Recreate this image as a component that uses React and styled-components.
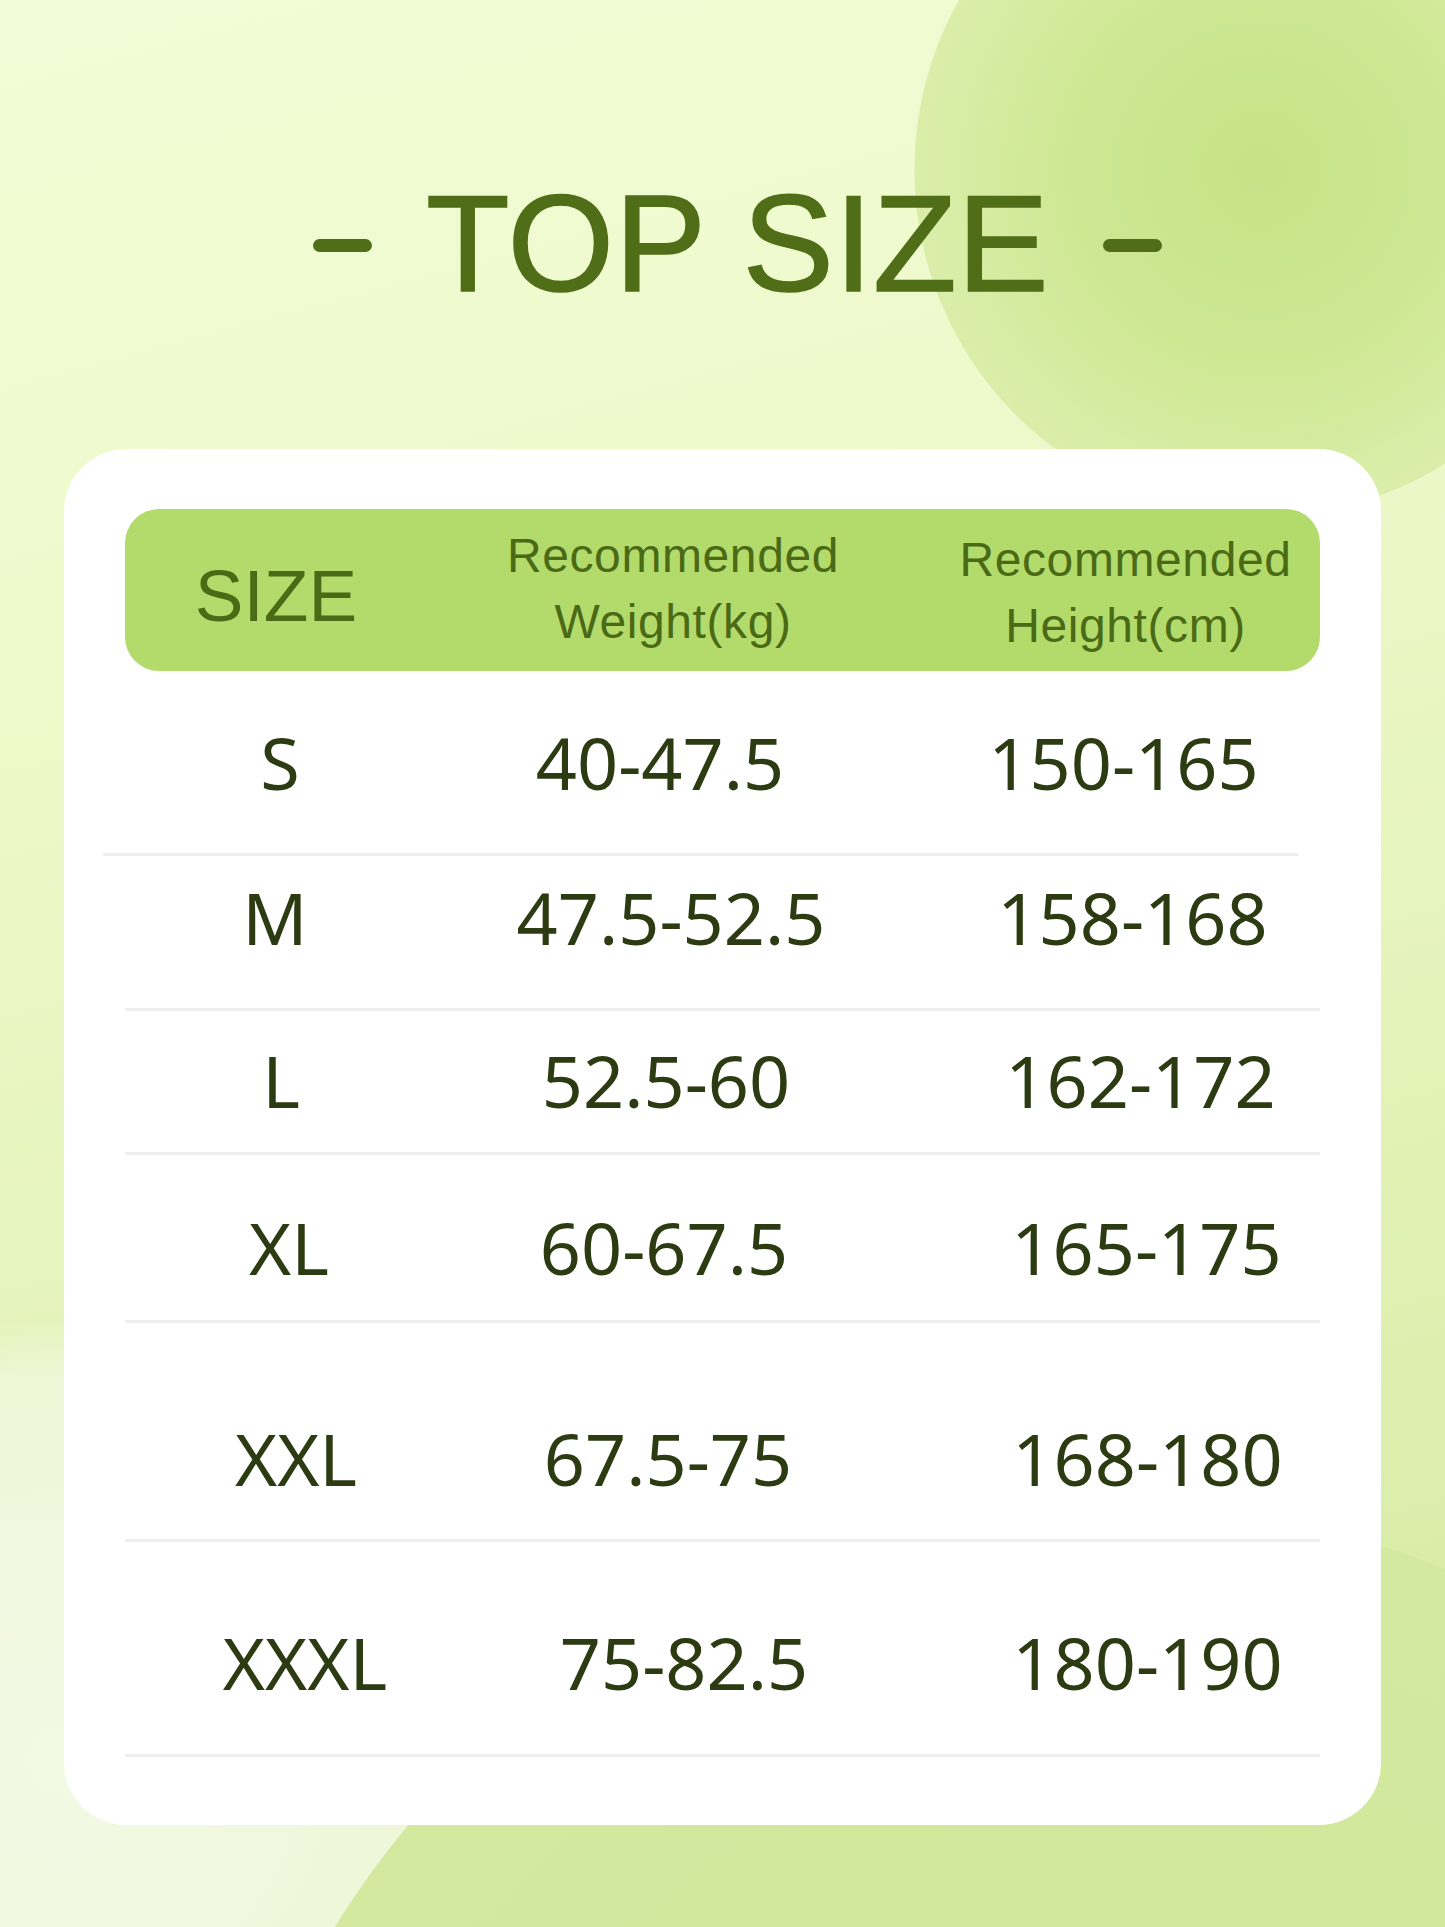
import React from "react";
import styled, { createGlobalStyle } from "styled-components";

const GlobalStyle = createGlobalStyle`
  * {
    box-sizing: border-box;
  }
  body {
    margin: 0;
    overflow: hidden;
  }
`;

const Page = styled.div`
  width: 1445px;
  height: 1927px;
  padding-top: 174px;
  display: flex;
  flex-direction: column;
  align-items: center;
  background:
    radial-gradient(circle at 1261px 170px, #c6e388 0px, #cde792 180px, #daeeaa 346px, rgba(218, 238, 170, 0) 347px),
    radial-gradient(circle at 1100px 2400px, #cfe698 0px, #d3e9a0 899px, rgba(211, 233, 160, 0) 900px),
    radial-gradient(circle at 60px 1760px, #f3f9e4 0px, #eef7d8 380px, rgba(238, 247, 216, 0) 440px),
    linear-gradient(165deg, #f3fcd6 0%, #eef9cb 30%, #e4f3ba 60%, #d2e99d 100%);
`;

const Title = styled.h1`
  margin: 0 0 135px 30px;
  display: flex;
  align-items: center;
  gap: 54px;
  height: 140px;
  font-family: "Liberation Sans", Arial, sans-serif;
  font-weight: 400;
  font-size: 137px;
  line-height: 140px;
  letter-spacing: 0.5px;
  color: #4f6e17;
  -webkit-text-stroke: 1.5px #4f6e17;
`;

const Dash = styled.span`
  width: 59px;
  height: 13px;
  border-radius: 7px;
  background: #4f6e17;
  margin-top: 2px;
`;

const Card = styled.section`
  width: 1317px;
  background: #ffffff;
  border-radius: 62px;
  padding: 60px 61px 68px;
`;

const HeaderBar = styled.div`
  height: 162px;
  border-radius: 34px;
  background: #b3db6c;
  display: grid;
  grid-template-columns: 302px 496px 397px;
  align-items: center;
  font-family: "Liberation Sans", Arial, sans-serif;
  color: #4b6a15;
`;

const HeadCell = styled.div`
  text-align: center;
  font-size: ${(p) => (p.$big ? 73 : 48)}px;
  line-height: ${(p) => (p.$big ? 1 : "66px")};
  letter-spacing: ${(p) => (p.$big ? 0 : 0.6)}px;
  padding-left: ${(p) => Math.max(0, (p.$dx || 0) * 2)}px;
  padding-right: ${(p) => Math.max(0, -(p.$dx || 0) * 2)}px;
  margin-top: ${(p) => p.$dy || 0}px;
`;

const Row = styled.div`
  display: grid;
  grid-template-columns: 326px 434px 435px;
  align-items: center;
  height: ${(p) => p.$h}px;
  margin-left: ${(p) => -(p.$shift || 0)}px;
  margin-right: ${(p) => p.$shift || 0}px;
  border-bottom: 3px solid #eeeeee;
  padding-top: ${(p) => Math.max(0, p.$dy * 2)}px;
  padding-bottom: ${(p) => Math.max(0, -p.$dy * 2)}px;
  font-family: "Noto Sans", "Open Sans", sans-serif;
  font-size: 72px;
  line-height: 1;
  color: #2d3b12;
`;

const Cell = styled.div`
  text-align: center;
  white-space: nowrap;
  padding-left: ${(p) => Math.max(0, p.$dx * 2)}px;
  padding-right: ${(p) => Math.max(0, -p.$dx * 2)}px;
`;

const rows = [
  { size: "S", weight: "40-47.5", height: "150-165", h: 185, dy: 0, shift: 22, dx: [14, 14, 7] },
  { size: "M", weight: "47.5-52.5", height: "158-168", h: 155, dy: -15, dx: [-13, 3, -6] },
  { size: "L", weight: "52.5-60", height: "162-172", h: 144, dy: -2, dx: [-7, -2, 2] },
  { size: "XL", weight: "60-67.5", height: "165-175", h: 168, dy: 9, dx: [1, -4, 8] },
  { size: "XXL", weight: "67.5-75", height: "168-180", h: 219, dy: 27, dx: [8, 0, 9] },
  { size: "XXXL", weight: "75-82.5", height: "180-190", h: 215, dy: 14, dx: [17, 16, 9] },
];

// third column sits further right than an even split would put it
const COL3 = 36;

function App() {
  return (
    <>
      <GlobalStyle />
      <Page>
        <Title>
          <Dash aria-hidden="true" />
          TOP SIZE
          <Dash aria-hidden="true" />
        </Title>
        <Card>
          <HeaderBar>
            <HeadCell $big $dy={10}>SIZE</HeadCell>
            <HeadCell $dx={-2} $dy={-2}>
              Recommended
              <br />
              Weight(kg)
            </HeadCell>
            <HeadCell $dx={4} $dy={6}>
              Recommended
              <br />
              Height(cm)
            </HeadCell>
          </HeaderBar>
          {rows.map((r) => (
            <Row key={r.size} $h={r.h} $dy={r.dy} $shift={r.shift}>
              <Cell $dx={r.dx[0]}>{r.size}</Cell>
              <Cell $dx={r.dx[1]}>{r.weight}</Cell>
              <Cell $dx={COL3 + r.dx[2]}>{r.height}</Cell>
            </Row>
          ))}
        </Card>
      </Page>
    </>
  );
}

export default App;
